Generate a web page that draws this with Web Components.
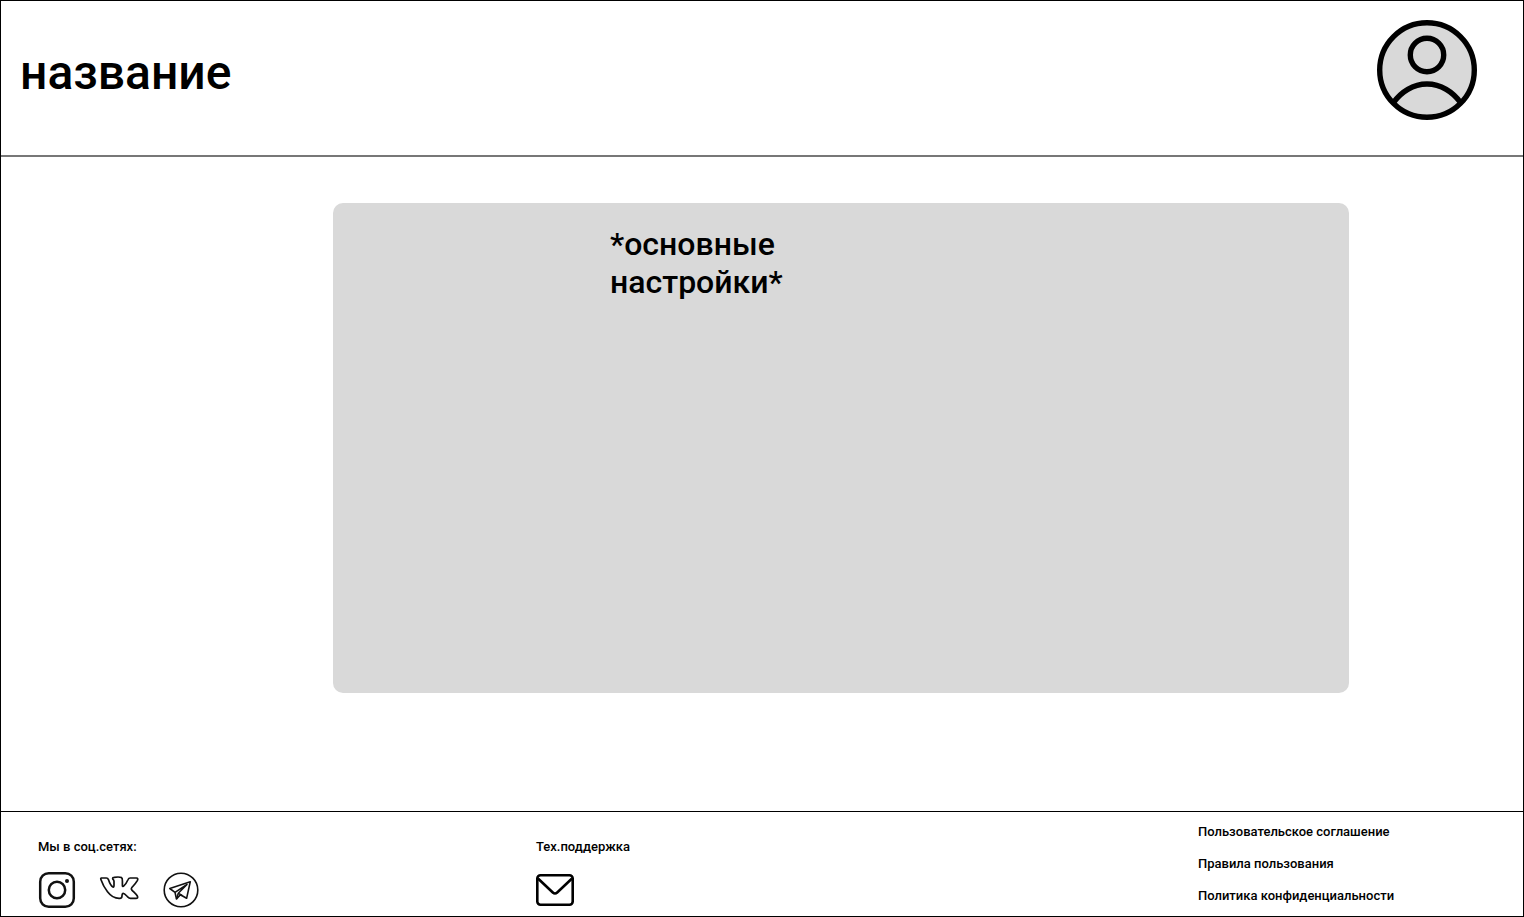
<!DOCTYPE html>
<html lang="ru">
<head>
<meta charset="utf-8">
<meta name="viewport" content="width=device-width, initial-scale=1">
<title>Настройки</title>
<style>
html, body { margin: 0; }
body { background: #fff; color: #000; font-family: Roboto, sans-serif; font-weight: 500; }
</style>
</head>
<body>
<app-shell>
  <app-header slot="header" label="название"></app-header>
  <settings-panel>*основные настройки*</settings-panel>
  <app-footer slot="footer">
    <footer-group heading="Мы в соц.сетях:">
      <icon-link kind="instagram" label="Instagram"></icon-link>
      <icon-link kind="vk" label="ВКонтакте"></icon-link>
      <icon-link kind="telegram" label="Telegram"></icon-link>
    </footer-group>
    <footer-group heading="Тех.поддержка">
      <icon-link kind="mail" label="Написать в поддержку"></icon-link>
    </footer-group>
    <legal-links></legal-links>
  </app-footer>
</app-shell>

<script>
class BaseElement extends HTMLElement {
  constructor() {
    super();
    this.attachShadow({ mode: 'open' });
  }
  connectedCallback() {
    this.shadowRoot.innerHTML = '<style>*{box-sizing:border-box}:host{box-sizing:border-box}a,button{color:inherit;font:inherit;text-decoration:none}</style>' + this.view();
  }
}

customElements.define('app-shell', class extends BaseElement {
  view() {
    return `<style>
      :host { display: flex; flex-direction: column; min-height: 100vh; border: 1px solid #000; }
      main { flex: 1; display: flex; padding: 46px 174px 118px 332px; }
    </style>
    <slot name="header"></slot>
    <main><slot></slot></main>
    <slot name="footer"></slot>`;
  }
});

customElements.define('app-header', class extends BaseElement {
  view() {
    return `<style>
      :host { display: block; border-bottom: 2px solid #777; }
      header { display: flex; justify-content: space-between; align-items: center; padding: 19px 46px 35px 19px; }
      h1 { margin: 0; padding-top: 6px; font-size: 48px; line-height: 56px; font-weight: 500; }
      button { display: block; padding: 0; border: 0; border-radius: 50%; background: none; cursor: pointer; }
      svg { display: block; }
    </style>
    <header>
      <h1>${this.getAttribute('label')}</h1>
      <button type="button" aria-label="Профиль">
        <svg width="100" height="100" viewBox="0 0 100 100" fill="none" stroke="#000" stroke-width="5.4">
          <circle cx="50" cy="50" r="47.3" fill="#d9d9d9"/>
          <circle cx="50" cy="35" r="16.7"/>
          <path d="M16.5 82.500C24 72 36 64 50 64S76 72 83.500 82.500"/>
        </svg>
      </button>
    </header>`;
  }
});

customElements.define('settings-panel', class extends BaseElement {
  view() {
    return `<style>
      :host { display: block; flex: 1; padding: 22px 277px; border-radius: 10px; background: #d9d9d9; }
      h2 { margin: 0; max-width: 200px; font-size: 32px; line-height: 38px; font-weight: 500; }
    </style>
    <h2><slot></slot></h2>`;
  }
});

customElements.define('app-footer', class extends BaseElement {
  view() {
    return `<style>
      :host { display: block; border-top: 1px solid #000; font-size: 13px; line-height: 16px; }
      footer { display: grid; grid-template-columns: 498fr 662fr 325fr; padding: 12px 0 7px 37px; }
    </style>
    <footer><slot></slot></footer>`;
  }
});

customElements.define('footer-group', class extends BaseElement {
  view() {
    return `<style>
      :host { display: block; padding-top: 15px; }
      h3 { margin: 0 0 16px; font-size: 13px; line-height: 16px; font-weight: 500; }
      nav { display: flex; gap: 24px; }
    </style>
    <h3>${this.getAttribute('heading')}</h3>
    <nav aria-label="${this.getAttribute('heading')}"><slot></slot></nav>`;
  }
});

const ICONS = {
  instagram: `<rect x="2.200" y="3.200" width="33.600" height="33.600" rx="8.500" stroke-width="2.500"/>
    <circle cx="19" cy="20" r="8.200" stroke-width="2.500"/><circle cx="29" cy="11" r="2" fill="#111" stroke="none"/>`,
  vk: `<path stroke-width="1.700" d="M1.200 8H6.400C7.600 8 8 8.500 8.400 9.600C9.400 12.600 11.300 16.200 12.900 17C13.800 17.300 14 16.500 14 15.200V11.400C13.900 9.700 13 9.500 12.700 8.800C12.400 7.900 13.200 7.400 14.200 7.300C16.600 7 19.900 6.800 21.400 7.600C22.400 8.200 22.500 9.400 22.400 11.200V15.400C22.400 16.500 23.100 16.700 23.800 16C25.600 14.300 27.200 11.500 28.100 9.500C28.600 8.300 29.200 8 30.200 8H36.400C37.900 8 38.100 9 37.300 10.600C35.900 13.200 33 16.200 31.700 17.700C30.900 18.700 31 19.100 31.900 20.100C33.300 21.700 36.100 24 37.300 26C38.200 27.500 37.500 28.300 36 28.300H30.500C28.900 28.300 28.500 27.700 27.300 26.500C26 25.200 24.400 23.400 23.200 23.400C22 23.400 22.100 25 21.900 26.600C21.800 27.900 21.100 28.300 19.800 28.300C14.800 28.600 10.800 26.100 7.500 21.800C4.300 17.600 2.200 13.300 1 9.800C.6 8.700.7 8.100 1.200 8Z"/>`,
  telegram: `<circle cx="19" cy="20" r="16.800" stroke-width="1.600"/>
    <path stroke-width="1.600" d="M7.800 18.500L28.300 11.700L24.600 28.300L18.400 24.700L14.500 29L13 22.300L7.800 18.500Z"/>
    <path stroke-width="1.500" d="M13 22.300L25 14.500L16.300 23.200L14.500 29M16.300 23.200L20 25.500"/>`,
  mail: `<rect x="1.300" y="5.300" width="35.400" height="29.400" rx="3.200" stroke="#000" stroke-width="2.600"/>
    <path stroke="#000" stroke-width="2.600" d="M2 8.500L16.800 22.500Q19 24.500 21.200 22.500L36 8.500"/>`
};

customElements.define('icon-link', class extends BaseElement {
  view() {
    return `<style>
      :host, a, svg { display: block; }
      a { cursor: pointer; }
    </style>
    <a href="#${this.getAttribute('kind')}" aria-label="${this.getAttribute('label')}">
      <svg width="38" height="38" viewBox="0 1 38 38" overflow="visible" fill="none" stroke="#111" stroke-linejoin="round">${ICONS[this.getAttribute('kind')]}</svg>
    </a>`;
  }
});

customElements.define('legal-links', class extends BaseElement {
  view() {
    return `<style>
      :host { display: block; }
      ul { display: flex; flex-direction: column; gap: 16px; margin: 0; padding: 0; list-style: none; }
    </style>
    <ul>
      <li><a href="#agreement">Пользовательское соглашение</a></li>
      <li><a href="#rules">Правила пользования</a></li>
      <li><a href="#privacy">Политика конфиденциальности</a></li>
    </ul>`;
  }
});
</script>
</body>
</html>
